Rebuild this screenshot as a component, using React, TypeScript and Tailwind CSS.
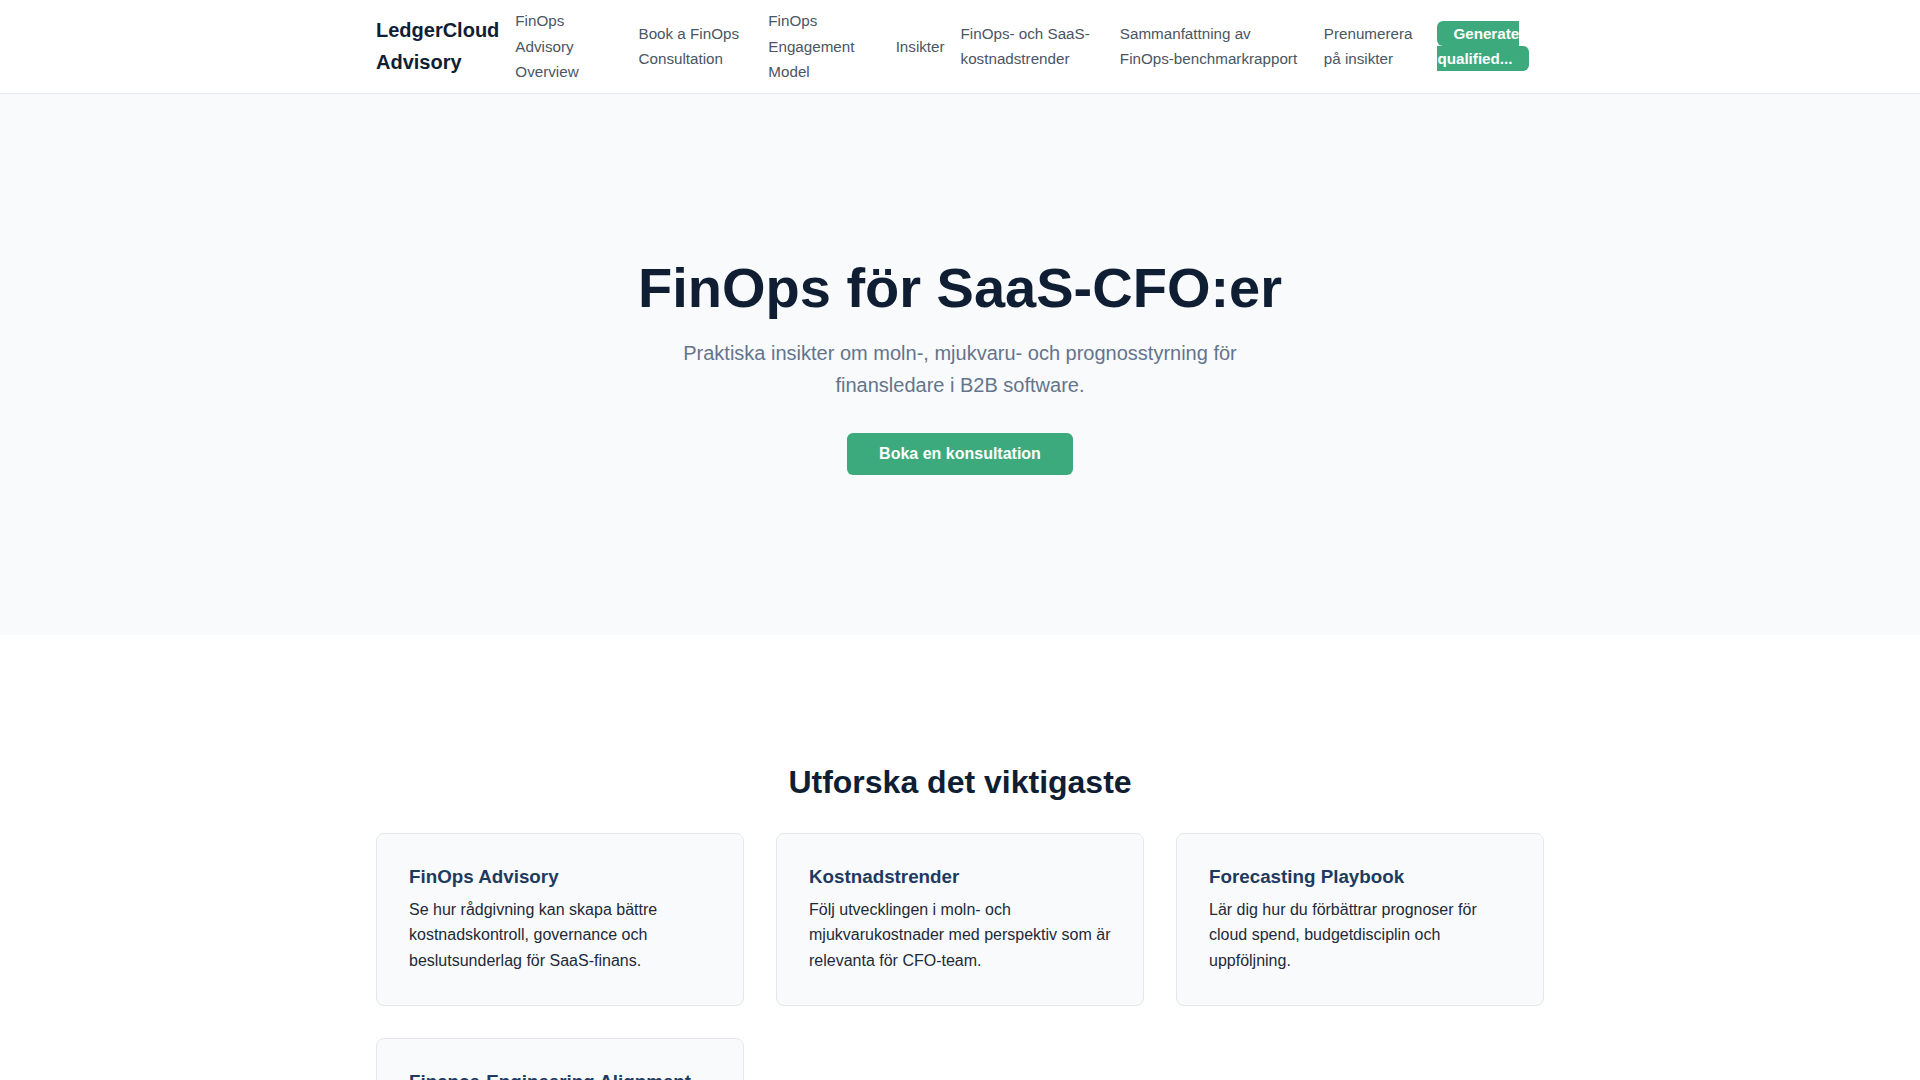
import React from "react";

const navLinks = [
  "FinOps Advisory Overview",
  "Book a FinOps Consultation",
  "FinOps Engagement Model",
  "Insikter",
  "FinOps- och SaaS-kostnadstrender",
  "Sammanfattning av FinOps-benchmarkrapport",
  "Prenumerera på insikter",
];

const cards = [
  {
    title: "FinOps Advisory",
    body: "Se hur rådgivning kan skapa bättre kostnadskontroll, governance och beslutsunderlag för SaaS-finans.",
  },
  {
    title: "Kostnadstrender",
    body: "Följ utvecklingen i moln- och mjukvarukostnader med perspektiv som är relevanta för CFO-team.",
  },
  {
    title: "Forecasting Playbook",
    body: "Lär dig hur du förbättrar prognoser för cloud spend, budgetdisciplin och uppföljning.",
  },
  {
    title: "Finance-Engineering Alignment",
    body: "Skapa gemensamma arbetssätt mellan finans och engineering för hållbar kostnadsstyrning.",
  },
];

function Header() {
  return (
    <header className="bg-white border-b border-[#e5e7eb]">
      <div className="max-w-[1200px] mx-auto px-4 py-2 flex items-center justify-between gap-4">
        <a href="#" className="w-min text-[1.25rem] leading-[1.6] font-bold text-[#0f1e33]">
          LedgerCloud Advisory
        </a>
        <nav className="flex-1">
          <ul className="flex items-center gap-4 text-[0.95rem] leading-[1.6rem]">
            {navLinks.map(l => (
              <li key={l}>
                <a href="#" className="text-[#4b5563]">
                  {l}
                </a>
              </li>
            ))}
            <li>
              <a href="#" className="bg-[#3daa7d] text-white font-bold px-4 py-1 rounded-md">
                Generate qualified...
              </a>
            </li>
          </ul>
        </nav>
      </div>
    </header>
  );
}

function Hero() {
  return (
    <section className="bg-[#f8fafc] py-40 text-center">
      <div className="max-w-[1200px] mx-auto px-4 flex flex-col items-center">
        <h1 className="text-[3.5rem] leading-[1.2] font-bold text-[#0f1e33] mb-4">
          FinOps för SaaS-CFO:er
        </h1>
        <p className="text-[1.25rem] leading-[1.6] text-[#64748b] max-w-[600px] mb-8">
          Praktiska insikter om moln-, mjukvaru- och prognosstyrning för finansledare i B2B software.
        </p>
        <a
          href="#"
          className="bg-[#3daa7d] text-white font-bold text-base leading-[1.6] px-8 py-2 rounded-md"
        >
          Boka en konsultation
        </a>
      </div>
    </section>
  );
}

function Explore() {
  return (
    <section className="bg-white pt-32 pb-24">
      <div className="max-w-[1200px] mx-auto px-4">
        <h2 className="text-[2rem] leading-[1.2] font-bold text-[#0f1e33] text-center mb-8">
          Utforska det viktigaste
        </h2>
        <div className="grid grid-cols-3 gap-8">
          {cards.map(c => (
            <div key={c.title} className="bg-[#f8fafc] border border-[#e5e7eb] rounded-lg p-8">
              <h3 className="text-[1.175rem] leading-[1.2] font-bold text-[#1e3a5f] mb-2">{c.title}</h3>
              <p className="text-base leading-[1.6] text-[#1f2937]">{c.body}</p>
            </div>
          ))}
        </div>
      </div>
    </section>
  );
}

export default function App() {
  return (
    <div className="min-h-screen bg-white" style={{ fontFamily: '"Liberation Sans", Arial, sans-serif' }}>
      <Header />
      <Hero />
      <Explore />
    </div>
  );
}
